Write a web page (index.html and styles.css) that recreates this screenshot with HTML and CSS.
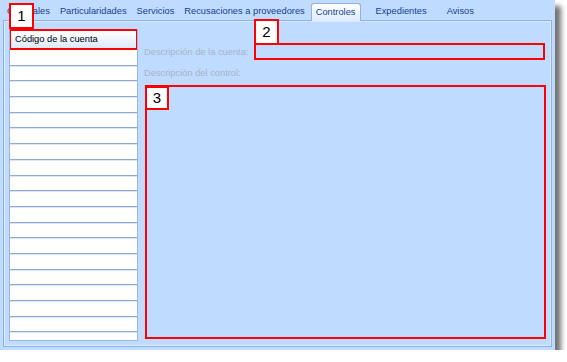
FILE: index.html
```html
<!DOCTYPE html>
<html lang="es">
<head>
    <meta charset="UTF-8">
    <title>Controles</title>
    <link rel="stylesheet" href="styles.css">
</head>
<body>
    <div class="window">
        <div class="tabs">
            <span class="tab">Generales</span>
            <span class="tab">Particularidades</span>
            <span class="tab">Servicios</span>
            <span class="tab">Recusaciones a proveedores</span>
            <span class="tab active">Controles</span>
            <span class="tab spaced">Expedientes</span>
            <span class="tab spaced">Avisos</span>
        </div>
        <div class="panel">
            <div class="account-list">
                <div class="list-header">Código de la cuenta</div>
                <div class="list-row"></div>
                <div class="list-row"></div>
                <div class="list-row"></div>
                <div class="list-row"></div>
                <div class="list-row"></div>
                <div class="list-row"></div>
                <div class="list-row"></div>
                <div class="list-row"></div>
                <div class="list-row"></div>
                <div class="list-row"></div>
                <div class="list-row"></div>
                <div class="list-row"></div>
                <div class="list-row"></div>
                <div class="list-row"></div>
                <div class="list-row"></div>
                <div class="list-row"></div>
                <div class="list-row"></div>
                <div class="list-row"></div>
                <div class="list-row"></div>
            </div>
            <div class="details">
                <div class="field-row">
                    <label class="field-label">Descripción de la cuenta:</label>
                    <div class="field-input"></div>
                </div>
                <label class="field-label control-label">Descripción del control:</label>
                <div class="control-area"></div>
            </div>
        </div>

        <div class="callout callout-1">1</div>
        <div class="callout callout-2">2</div>
        <div class="callout callout-3">3</div>
    </div>
</body>
</html>
```

FILE: styles.css
```css
body {
    margin: 0;
    background: #ffffff;
    font-family: "Liberation Sans", Arial, sans-serif;
    font-size: 9.3px;
}
.window {
    position: relative;
    width: 555px;
    height: 350px;
    background: #bfdbff;
    box-shadow: 6px 6px 5px rgba(0, 0, 0, 0.55);
}
.tabs {
    display: flex;
    align-items: flex-end;
    height: 20px;
    padding-left: 2px;
}
.tab {
    padding: 0 5px 4px 5px;
    color: #15428b;
    white-space: nowrap;
}
.tab.active {
    padding: 3px 4px 4px 4px;
    margin-left: 1px;
    background: linear-gradient(#ffffff, #dfecfd);
    border: 1px solid #8db2e3;
    border-bottom: none;
    border-radius: 3px 3px 0 0;
    position: relative;
    top: 1px;
}
.tab.spaced {
    margin-left: 10px;
}
.panel {
    display: flex;
    gap: 5px;
    height: 312px;
    margin: 0 3px;
    padding: 8px 5px 5px 5px;
    border: 1px solid #8db2e3;
    box-shadow: inset 1px 1px 0 #dbe9fd, inset -1px -1px 0 #dbe9fd;
}
.account-list {
    display: flex;
    flex-direction: column;
    width: 129px;
    height: 312px;
    overflow: hidden;
    background: #ffffff;
    border: 1px solid #9ab5de;
    border-top: none;
    box-sizing: border-box;
}
.list-header {
    flex: none;
    height: 21px;
    line-height: 17px;
    padding-left: 4px;
    box-sizing: border-box;
    background: linear-gradient(#ffffff, #dde9f8);
    border: 2px solid #ff0000;
    margin: 0 -1px;
    color: #000000;
}
.list-row {
    flex: none;
    height: 14.7px;
    border-bottom: 1px solid #8ea9d6;
    box-shadow: 0 1px 0 #dce6f5;
}
.details {
    flex: 1;
    display: flex;
    flex-direction: column;
}
.field-row {
    display: flex;
    align-items: center;
    margin-top: 14px;
    height: 17px;
}
.field-label {
    color: #a7b4c6;
    white-space: nowrap;
}
.field-row .field-label {
    width: 110px;
    margin-left: 1px;
}
.field-input {
    flex: 1;
    height: 17px;
    margin-right: 1px;
    box-sizing: border-box;
    border: 2px solid #ff0000;
}
.control-label {
    margin: 8px 0 0 1px;
    height: 17px;
}
.control-area {
    height: 254px;
    margin-left: 2px;
    box-sizing: border-box;
    border: 2px solid #ff0000;
}
.callout {
    position: absolute;
    width: 25px;
    height: 26px;
    box-sizing: border-box;
    border: 2px solid #ff0000;
    background: #ffffff;
    color: #000000;
    font-size: 15px;
    line-height: 22px;
    text-align: center;
}
.callout-1 {
    left: 9px;
    top: 3px;
}
.callout-2 {
    left: 254px;
    top: 19px;
}
.callout-3 {
    left: 145px;
    top: 86px;
    width: 24px;
    height: 24px;
    line-height: 20px;
}
```
